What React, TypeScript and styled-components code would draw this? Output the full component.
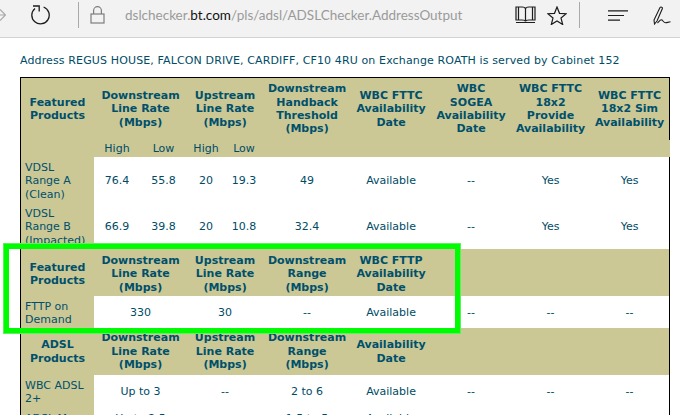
import type { FC } from "react";
import styled, { createGlobalStyle } from "styled-components";

const GlobalStyle = createGlobalStyle`
  html, body {
    margin: 0;
    padding: 0;
    width: 680px;
    height: 415px;
    overflow: hidden;
    background: #fff;
  }
`;

const Page = styled.div`
  position: relative;
  width: 680px;
  height: 415px;
  overflow: hidden;
  font-family: "DejaVu Sans", Verdana, sans-serif;
  font-size: 11px;
  color: #004b66;
`;

const Toolbar = styled.div`
  display: flex;
  align-items: center;
  height: 38px;
  box-sizing: border-box;
  background: #f2f2f2;
  border-bottom: 1px solid #d2d2d2;
`;

const IconSlot = styled.div<{ $width: number }>`
  display: flex;
  justify-content: center;
  align-items: center;
  flex: none;
  width: ${({ $width }) => $width}px;
  height: 30px;
  margin-top: -7px;
`;

const Divider = styled.div`
  flex: none;
  width: 1px;
  height: 26px;
  margin-top: -7px;
  background: #a9a9a9;
`;

const UrlText = styled.div`
  flex: 1;
  margin-top: -7px;
  padding-left: 10px;
  font-family: Lato, "Open Sans", sans-serif;
  font-size: 13.5px;
  color: #9a9a9a;
  white-space: nowrap;
`;

const UrlHost = styled.span`
  color: #111;
`;

const AddressLine = styled.p`
  margin: 0;
  padding: 16px 0 10px 20px;
  line-height: 13px;
  letter-spacing: 0.13px;
`;

const Table = styled.table`
  width: 650px;
  margin-left: 20px;
  border-collapse: separate;
  border-spacing: 0;
  table-layout: fixed;
  border: solid #000;
  border-width: 1px 1px 0 1px;
  line-height: 13.4px;
`;

const HeadCell = styled.th<{ $nudge?: number }>`
  padding: ${({ $nudge = 0 }) => $nudge}px 0 0;
  background: #cbc896;
  color: #00506b;
  font-size: 11px;
  font-weight: bold;
  text-align: center;
  vertical-align: middle;
`;

const SubHeadCell = styled.td<{ $bleed?: boolean }>`
  padding: 0;
  height: 17px;
  background: #cbc896;
  text-align: center;
  box-shadow: ${({ $bleed }) => ($bleed ? "1px 0 0 #cbc896" : "none")};
`;

const ProductCell = styled.td<{ $nudge?: number }>`
  padding: ${({ $nudge = 0 }) => $nudge}px 0 0 4px;
  background: #cbc896;
  color: #00506b;
  text-align: left;
  vertical-align: middle;
`;

const ValueCell = styled.td<{ $nudge?: number }>`
  padding: ${({ $nudge = 0 }) => $nudge}px 0 0;
  background: #fff;
  text-align: center;
  vertical-align: middle;
`;

const Row = styled.tr<{ $height: number }>`
  height: ${({ $height }) => $height}px;
`;

const Highlight = styled.div`
  position: absolute;
  left: 3px;
  top: 243px;
  width: 458px;
  height: 91px;
  box-sizing: border-box;
  border: 6px solid #00fc00;
  outline: 1px solid #5cf25c;
  outline-offset: -1px;
`;

const BackIcon = () => (
  <svg width="6" height="14" viewBox="0 0 6 14" fill="none" stroke="#a8a8a8" strokeWidth="1.2">
    <path d="M0 7h5.500M0 1.500 5.500 7 0 12.500" />
  </svg>
);

const RefreshIcon = () => (
  <svg width="20" height="20" viewBox="0 0 20 20" fill="none" stroke="#1c1c1c" strokeWidth="1.3">
    <path d="M5 3.400A8.700 8.700 0 1 0 13.600 2" />
    <path d="M3 1h6.200v5.500" />
  </svg>
);

const LockIcon = () => (
  <svg width="15" height="18" viewBox="0 0 15 18" fill="none" stroke="#7d7d7d" strokeWidth="1.2">
    <rect x="1" y="8" width="13" height="9" />
    <path d="M3.600 8V4.600a3.900 3.900 0 0 1 7.800 0V8" />
  </svg>
);

const BookIcon = () => (
  <svg width="21" height="18" viewBox="0 0 21 18" fill="none" stroke="#1c1c1c" strokeWidth="1.2">
    <path d="M1 1h6c1.800 0 3.500.6 3.500 2v12.500c0-1-1.700-1.500-3.500-1.500H1zM20 1h-6c-1.800 0-3.500.6-3.500 2v12.500c0-1 1.700-1.500 3.500-1.500h6z" />
    <path d="M1 16.500h19M3.500 1v13M17.500 1v13" />
  </svg>
);

const StarIcon = () => (
  <svg width="20" height="19" viewBox="0 0 20 19" fill="none" stroke="#1c1c1c" strokeWidth="1.2">
    <path d="M10 1l2.500 6.300 6.700.4-5.200 4.300 1.700 6.500L10 14.900l-5.700 3.600L6 12 .8 7.700l6.700-.4z" />
  </svg>
);

const HubIcon = () => (
  <svg width="20" height="11" viewBox="0 0 20 11" fill="none" stroke="#1c1c1c" strokeWidth="1.200">
    <path d="M0 .8h20M0 5.500h16M0 10.200h12" />
  </svg>
);

const NoteIcon = () => (
  <svg width="19" height="19" viewBox="0 0 19 19" fill="none" stroke="#1c1c1c" strokeWidth="1.100">
    <path d="M1.500 18 1 14 7 1.500c.8-1 2.700-.2 2.400 1L4 15z" />
    <path d="M4.500 17c2-2 3-4 4.500-3 1 .8 2 2.800 3.500 2.800 1.500 0 2.500-.6 5-1" />
  </svg>
);

const Lines: FC<{ text: string[] }> = ({ text }) => (
  <>
    {text.map((line, index) => (
      <span key={line}>
        {index > 0 && <br />}
        {line}
      </span>
    ))}
  </>
);

const fibreHead = [
  ["Downstream", "Line Rate", "(Mbps)"],
  ["Upstream", "Line Rate", "(Mbps)"],
  ["Downstream", "Range", "(Mbps)"],
];

const SectionHead: FC<{ title: string[]; last: string[]; nudge?: number }> = ({ title, last, nudge }) => (
  <Row $height={47}>
    <HeadCell $nudge={nudge}>
      <Lines text={title} />
    </HeadCell>
    {fibreHead.map((head, index) => (
      <HeadCell key={index} colSpan={index < 2 ? 2 : 1} $nudge={nudge}>
        <Lines text={head} />
      </HeadCell>
    ))}
    <HeadCell $nudge={nudge}>
      <Lines text={last} />
    </HeadCell>
    <HeadCell colSpan={3} />
  </Row>
);

const VdslRow: FC<{ name: string[]; height: number; values: string[] }> = ({ name, height, values }) => (
  <Row $height={height}>
    <ProductCell>
      <Lines text={name} />
    </ProductCell>
    {values.map((value, index) => (
      <ValueCell key={index}>{value}</ValueCell>
    ))}
  </Row>
);

const SpanRow: FC<{ name: string[]; height: number; values: string[]; nudge?: number }> = ({
  name,
  height,
  values,
  nudge,
}) => (
  <Row $height={height}>
    <ProductCell $nudge={nudge}>
      <Lines text={name} />
    </ProductCell>
    <ValueCell colSpan={2} $nudge={nudge}>
      {values[0]}
    </ValueCell>
    <ValueCell colSpan={2} $nudge={nudge}>
      {values[1]}
    </ValueCell>
    {values.slice(2).map((value, index) => (
      <ValueCell key={index} $nudge={nudge}>
        {value}
      </ValueCell>
    ))}
  </Row>
);

const columns = [73, 46, 47, 38, 38, 88, 80, 80, 79, 79];

const App: FC = () => (
  <Page>
    <GlobalStyle />
    <Toolbar>
      <IconSlot $width={6}>
        <BackIcon />
      </IconSlot>
      <IconSlot $width={68}>
        <RefreshIcon />
      </IconSlot>
      <IconSlot $width={4} />
      <Divider />
      <IconSlot $width={36}>
        <LockIcon />
      </IconSlot>
      <UrlText>
        dslchecker.<UrlHost>bt.com</UrlHost>/pls/adsl/ADSLChecker.AddressOutput
      </UrlText>
      <IconSlot $width={32}>
        <BookIcon />
      </IconSlot>
      <IconSlot $width={32}>
        <StarIcon />
      </IconSlot>
      <IconSlot $width={6} />
      <Divider />
      <IconSlot $width={12} />
      <IconSlot $width={52}>
        <HubIcon />
      </IconSlot>
      <IconSlot $width={36}>
        <NoteIcon />
      </IconSlot>
    </Toolbar>
    <AddressLine>
      Address REGUS HOUSE, FALCON DRIVE, CARDIFF, CF10 4RU on Exchange ROATH is served by Cabinet 152
    </AddressLine>
    <Table>
      <colgroup>
        {columns.map((width, index) => (
          <col key={index} style={{ width }} />
        ))}
      </colgroup>
      <tbody>
        <Row $height={62}>
          <HeadCell>
            <Lines text={["Featured", "Products"]} />
          </HeadCell>
          <HeadCell colSpan={2}>
            <Lines text={["Downstream", "Line Rate", "(Mbps)"]} />
          </HeadCell>
          <HeadCell colSpan={2}>
            <Lines text={["Upstream", "Line Rate", "(Mbps)"]} />
          </HeadCell>
          <HeadCell>
            <Lines text={["Downstream", "Handback", "Threshold", "(Mbps)"]} />
          </HeadCell>
          <HeadCell>
            <Lines text={["WBC FTTC", "Availability", "Date"]} />
          </HeadCell>
          <HeadCell>
            <Lines text={["WBC", "SOGEA", "Availability", "Date"]} />
          </HeadCell>
          <HeadCell>
            <Lines text={["WBC FTTC", "18x2", "Provide", "Availability"]} />
          </HeadCell>
          <HeadCell>
            <Lines text={["WBC FTTC", "18x2 Sim", "Availability"]} />
          </HeadCell>
        </Row>
        <tr>
          <SubHeadCell />
          <SubHeadCell>High</SubHeadCell>
          <SubHeadCell>Low</SubHeadCell>
          <SubHeadCell>High</SubHeadCell>
          <SubHeadCell>Low</SubHeadCell>
          <SubHeadCell />
          <SubHeadCell />
          <SubHeadCell />
          <SubHeadCell />
          <SubHeadCell $bleed />
        </tr>
        <VdslRow
          name={["VDSL", "Range A", "(Clean)"]}
          height={48}
          values={["76.4", "55.8", "20", "19.3", "49", "Available", "--", "Yes", "Yes"]}
        />
        <VdslRow
          name={["VDSL", "Range B", "(Impacted)"]}
          height={44}
          values={["66.9", "39.8", "20", "10.8", "32.4", "Available", "--", "Yes", "Yes"]}
        />
        <SectionHead title={["Featured", "Products"]} last={["WBC FTTP", "Availability", "Date"]} nudge={3} />
        <SpanRow
          name={["FTTP on", "Demand"]}
          height={32}
          nudge={2}
          values={["330", "30", "--", "Available", "--", "--", "--"]}
        />
        <SectionHead title={["ADSL", "Products"]} last={["Availability", "Date"]} />
        <SpanRow
          name={["WBC ADSL", "2+"]}
          height={34}
          values={["Up to 3", "--", "2 to 6", "Available", "--", "--", "--"]}
        />
        <SpanRow
          name={["ADSL Max"]}
          height={20}
          values={["Up to 2.5", "--", "1.5 to 5", "Available", "--", "--", "--"]}
        />
      </tbody>
    </Table>
    <Highlight />
  </Page>
);

export default App;
